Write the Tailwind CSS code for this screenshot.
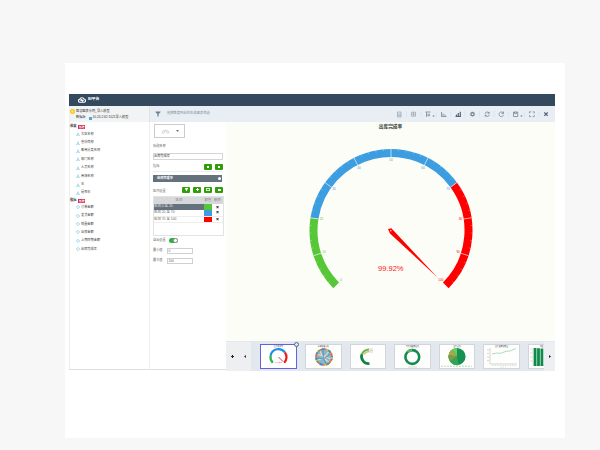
<!DOCTYPE html>
<html lang="zh-CN">
<head>
    <meta charset="UTF-8">
    <meta name="viewport" content="width=device-width, initial-scale=1.0">
    <title>出库完成率</title>
    <script src="https://cdn.jsdelivr.net/npm/@tailwindcss/browser@4"></script>
</head>
<body class="bg-[#f7f7f7] w-[600px] h-[450px] overflow-hidden pl-[65px] pt-[63px] font-['Liberation_Sans','Noto_Sans_CJK_SC',sans-serif] text-[4.4px] leading-none text-[#555]">
    <div class="w-[500px] h-[375px] bg-white pl-1 pt-[31px]">
        <div class="w-[486px] h-[276px] flex flex-col border-b border-[#dcdfe2] whitespace-nowrap">
            <header class="h-3 shrink-0 bg-[#34495e] flex items-center pl-[9px] gap-[2px] text-white font-bold text-[3.8px]">
                <svg class="w-2 h-[6px]" viewBox="0 0 16 12" fill="none" stroke="white" stroke-width="2.4"><path d="M4 10.5a3 3 0 0 1-.3-6A4.5 4.5 0 0 1 12 4a3.3 3.3 0 0 1 .5 6.5z"/><path d="M5 7.5l2-2 2 2.5 2-2"/></svg>
                <span>BI平台</span>
            </header>

            <div class="flex flex-1 min-h-0">
                <!-- Field list -->
                <aside class="w-[80px] shrink-0 border-l border-[#eee]">
                    <div class="h-4 bg-[#f2f3f4] pt-[2px] text-[3.2px] text-[#333]">
                        <div class="flex items-center h-[7px] gap-[1px]"><span class="w-[5px] h-[5px] rounded-full border border-[#f2b90c] bg-[#ffe34d]"></span>智慧图表示例_导入模型</div>
                        <div class="flex items-center h-[6px] pl-[6px]">数据源<span class="ml-[3px] mr-[1px] w-[3px] h-[3px] bg-[#4aa8e0]"></span>10.24.2.62:1521导入模型</div>
                    </div>
                    <div class="flex items-center h-2 pt-[1px] gap-[1px] font-bold text-[3.2px] text-[#333]">维度<span class="w-[7px] h-[4px] ml-[1px] bg-[#d6224c] text-white text-[2.8px] leading-[4px] text-center">新增</span></div>
                    <ul id="dims"></ul>
                    <div class="flex items-center h-[6px] pt-[1px] gap-[1px] font-bold text-[3.2px] text-[#333]">指标<span class="w-[7px] h-[4px] ml-[1px] bg-[#d6224c] text-white text-[2.8px] leading-[4px] text-center">新增</span></div>
                    <ul id="measures"></ul>
                </aside>

                <div class="flex-1 flex flex-col min-w-0">
                    <!-- Toolbar -->
                    <div class="h-4 shrink-0 bg-[#e8eef4] flex items-center border-l border-[#dde3e8] text-[#87929d]">
                        <svg class="w-[6px] h-[6px] ml-[5px]" viewBox="0 0 12 12" fill="#6f8294"><path d="M1 1h10v1.5L7.3 6v5H4.7V6L1 2.500z"/></svg>
                        <span class="ml-[6px] text-[3.3px]">拖拽维度到此处生成图表筛选</span>
                        <svg class="ml-auto mr-1 w-[157px] h-4 shrink-0" viewBox="394 106 157 16" fill="none" stroke="#778693" stroke-width=".8">
                            <g stroke="#d5dce3" stroke-width=".5"><path d="M406.500 111v6M421 111v6M436.500 111v6M450.500 111v6M465 111v6M479.500 111v6M494 111v6M508.500 111v6M524.500 111v6M539 111v6"/></g>
                            <path stroke="#a1abb4" d="M397.500 112h3.500v5h-3.500zM398 114h3M398 115.500h3"/>
                            <path stroke="#a1abb4" d="M411.500 112.200h4v4h-4zM413.500 112v4M411.500 114.200h4"/>
                            <path d="M425.500 112h5M426.500 112v5M429 113.500v3M427 115h3"/><path fill="#778693" stroke="none" d="M432.300 115.500h2.500l-1.200 1.400z"/>
                            <path d="M441.500 112v4.500h5M443 113.500v2.500M445 114.500v1.500"/>
                            <path stroke="#53677a" d="M455.500 116.500h5.500M456.500 116v-1.500M458.300 116v-3M460.300 116v-4.200" stroke-width="1.200"/>
                            <circle cx="472.500" cy="114.200" r="1.600" stroke="#6b7885" stroke-width="1.100"/><circle cx="472.500" cy="114.200" r="2.300" stroke="#6b7885" stroke-width=".5" stroke-dasharray=".7 .9"/>
                            <path d="M485 113.800a2.200 2.200 0 0 1 4-.8M489.400 114.600a2.200 2.200 0 0 1-4 .8M489.200 111.800v1.500h-1.500M485.200 116.700v-1.500h1.500"/>
                            <path d="M503.300 113a2.300 2.300 0 1 0 .3 1.800M503.500 111.500v2h-2"/>
                            <path d="M513.500 112h4.200v4.500h-4.200zM514.500 112v1.500h2v-1.500"/><path fill="#778693" stroke="none" d="M520.200 115.500h2.500l-1.200 1.400z"/>
                            <path d="M529.500 113.300v-1.500h1.500M532.700 111.800h1.500v1.500M529.500 115.200v1.500h1.500M532.700 116.700h1.500v-1.500"/>
                            <path stroke="#566675" stroke-width="1.200" d="M544.300 112.500l3.400 3.400M547.700 112.500l-3.400 3.400"/>
                        </svg>
                    </div>

                    <div class="flex flex-1 min-h-0">
                        <!-- Chart settings -->
                        <section class="w-[77px] shrink-0 border-l border-[#eee] px-[3px] pt-[2px] text-[3.2px] text-[#666]">
                            <div class="ml-[1px] w-[31px] h-[14px] border border-[#ccc] flex items-center justify-center gap-[6px]">
                                <svg class="w-[9px] h-[6px]" viewBox="0 0 18 12" fill="none" stroke="#aaa"><path d="M2 11a7 7 0 1 1 14 0M5 11a4 4 0 1 1 8 0"/></svg>
                                <svg class="w-[3px] h-[2px]" viewBox="0 0 3 2"><path d="M0 0h3L1.500 2z" fill="#777"/></svg>
                            </div>
                            <div class="h-[4px] mt-[7px]">标题名称</div>
                            <div class="mt-[4px] w-[70px] h-[7px] border border-[#d5d5d5] leading-[5px] text-[#333]">出库完成率</div>
                            <div class="flex items-center justify-between w-[70px] h-[7px] mt-[3px]">指标
                                <span class="flex gap-[3px]"><i class="w-2 h-[6px] rounded-[1px] bg-[#2f9e08] flex items-center justify-center"><b class="size-[2px] bg-white"></b></i><i class="w-2 h-[6px] rounded-[1px] bg-[#2f9e08] flex items-center justify-center"><b class="size-[2px] bg-white"></b></i></span>
                            </div>
                            <div class="mt-[1px] mb-[3px] w-[70px] h-0 border-b border-[#eee]"></div>
                            <div class="w-[69px] h-[7px] bg-[#66717e] text-white font-bold flex items-center justify-between pl-1 pr-[1px]">出库完成率<span class="size-[3px] rounded-full bg-white"></span></div>
                            <div class="flex items-center justify-between w-[70px] h-[7px] mt-[4px]"><span class="pt-1">区间设置</span>
                                <span class="flex gap-[3px]">
                                    <i class="w-2 h-[6px] rounded-[1px] bg-[#2f9e08] flex items-center justify-center"><svg class="size-[3px]" viewBox="0 0 3 3" fill="white"><path d="M0 0h3v1L2 2v1H1V2L0 1z"/></svg></i>
                                    <i class="w-2 h-[6px] rounded-[1px] bg-[#2f9e08] flex items-center justify-center"><svg class="size-[3px]" viewBox="0 0 3 3"><path d="M1.500 0v3M0 1.500h3" stroke="white"/></svg></i>
                                    <i class="w-2 h-[6px] rounded-[1px] bg-[#2f9e08] flex items-center justify-center"><b class="w-[4px] h-[3px] border border-white/80"></b></i>
                                    <i class="w-2 h-[6px] rounded-[1px] bg-[#2f9e08] flex items-center justify-center"><b class="w-[3px] h-[2px] bg-white"></b></i>
                                </span>
                            </div>
                            <div class="mt-[3px] w-[71px] h-[40px] border border-[#e3e3e3] text-[3.4px]">
                                <div class="grid grid-cols-[50px_8px_11px] h-[6.5px] bg-[#d7d8da] items-center text-center text-[#888]"><span>区间</span><span>颜色</span><span>删除</span></div>
                                <div class="grid grid-cols-[50px_8px_11px] h-[6.5px] bg-[#66717e] text-[#e8e8e8] items-center"><span>区间 0 至 20</span><span class="h-full bg-[#56c837]"></span><span class="bg-white h-full leading-[6px] text-center text-black text-[5px] font-bold">×</span></div>
                                <div class="grid grid-cols-[50px_8px_11px] h-[6.500px] items-center border-b border-[#eee]"><span>区间 20 至 70</span><span class="h-full bg-[#3c9ee0]"></span><span class="text-center text-black text-[5px] font-bold">×</span></div>
                                <div class="grid grid-cols-[50px_8px_11px] h-[6.500px] items-center border-b border-[#eee]"><span>区间 70 至 100</span><span class="h-full bg-[#ff0000]"></span><span class="text-center text-black text-[5px] font-bold">×</span></div>
                            </div>
                            <div class="flex items-center mt-[1px] h-[7px]">自动设置<span class="ml-[3px] w-[9px] h-[5px] rounded-full bg-[#27b33e] flex justify-end items-center"><b class="size-[5px] rounded-full bg-white border-[.5px] border-[#999]"></b></span></div>
                            <div class="flex items-center mt-[4px] h-[6px]">最小值<span class="ml-[4px] w-[26px] h-[6px] border border-[#d0d0d0] leading-[4px] pl-[1px]">0</span></div>
                            <div class="flex items-center mt-[4px] h-[6px]">最大值<span class="ml-[4px] w-[26px] h-[6px] border border-[#d0d0d0] leading-[4px] pl-[1px]">100</span></div>
                        </section>

                        <div class="flex-1 flex flex-col min-w-0">
                            <main class="h-[219px] shrink-0 bg-[#fcfdf6]">
                                <svg class="w-[329px] h-[219px]" viewBox="226 122 329 219">
                                    <text x="390.500" y="128.200" text-anchor="middle" font-size="4.700" font-weight="bold" fill="#2c3e36">出库完成率</text>
                                    <g id="gauge"></g>
                                    <path d="M388 229l3.300-.8 2.200 2.300L437.500 277.500 390 233.500z" fill="#ff0000"/>
                                    <circle cx="390.800" cy="230.700" r=".7" fill="white"/>
                                    <text x="390.800" y="271.300" text-anchor="middle" font-size="7.500" fill="#ff1020">99.92%</text>
                                </svg>
                            </main>

                            <!-- Chart strip -->
                            <footer class="flex-1 flex items-center bg-[#e3e8ef] pt-[1px]">
                                <div class="w-[25px] h-full shrink-0 bg-[#eeeff1] flex items-center justify-between px-[5px] mr-[9px]">
                                    <svg class="size-[3px]" viewBox="0 0 3 3"><path d="M1.500 0v3M0 1.500h3" stroke="#222"/></svg>
                                    <svg class="w-[2px] h-[3px]" viewBox="0 0 2 3"><path d="M2 0v3L0 1.500z" fill="#333"/></svg>
                                </div>
                                <div class="flex gap-[8px] w-[284px] shrink-0 overflow-hidden py-[2px]">
                                    <div class="relative shrink-0 w-[37px] h-[25px] border border-[#6260e6] bg-white">
                                        <svg class="size-full" viewBox="0 0 35 23" fill="none" stroke-width="2.200">
                                            <text x="17.500" y="2.300" text-anchor="middle" font-size="1.900" fill="#444" stroke="none">出库完成率</text>
                                            <path d="M11.800 17.700a8 8 0 0 1-2.200-7" stroke="#2fb34a"/><path d="M9.600 10.700a8 8 0 0 1 14.300-3.400" stroke="#1f8fe0"/><path d="M23.900 7.300a8 8 0 0 1-.7 10.400" stroke="#f01818"/>
                                            <path d="M17.500 12l4.500 4.500" stroke="#f01818" stroke-width=".9"/><text x="17.500" y="17.700" text-anchor="middle" font-size="2.200" fill="#f01818" stroke="none">99.92%</text>
                                        </svg>
                                        <span class="absolute -right-[3px] -top-[3px] size-[5px] rounded-full border border-[#5b6e80] bg-[#dce8ef]"></span>
                                    </div>
                                    <div class="shrink-0 w-[37px] h-[25px] border border-[#d2d6dc] bg-[#fefefc]">
                                        <svg class="size-full" viewBox="0 0 35 23" fill="none">
                                            <text x="17.500" y="2.300" text-anchor="middle" font-size="1.900" fill="#444">客商销售分析</text>
                                            <circle cx="18" cy="12" r="7.400" fill="#80b9d0"/>
                                            <path d="M11 9q8 3 14 5M14 6q3 8 9 11M23 6q-5 8-11 9" stroke="#efd5bd" stroke-width="1.200"/><path d="M11 13q8 2 13-4M17 5q-1 8 3 14" stroke="#4b91bd" stroke-width=".9"/>
                                            <circle cx="18" cy="12" r="8" stroke="#e36a55" stroke-width="1.700"/><circle cx="18" cy="12" r="8" stroke="#3b8cca" stroke-width="1.700" stroke-dasharray="3 4"/><circle cx="18" cy="12" r="8" stroke="#e8c93d" stroke-width="1.700" stroke-dasharray="2 8"/><circle cx="18" cy="12" r="8" stroke="#56ad67" stroke-width="1.700" stroke-dasharray="2 10" stroke-dashoffset="5"/>
                                        </svg>
                                    </div>
                                    <div class="shrink-0 w-[36px] h-[25px] border border-[#d2d6dc] bg-[#fefefc]">
                                        <svg class="size-full" viewBox="0 0 34 23" fill="none">
                                            <path d="M18.500 18.500A7 7 0 0 1 11 9" stroke="#11844c" stroke-width="2.600"/><path d="M10.800 9.500A8 8 0 0 1 18 4.500" stroke="#6eae56" stroke-width="2"/><path d="M13 9.500A6 6 0 0 1 18.500 6.500" stroke="#c6cf72" stroke-width="1.500"/>
                                            <path d="M18.500 4h3.500M18.500 5.500h3.500M18.500 7h3.500" stroke="#bbb" stroke-width=".6"/>
                                        </svg>
                                    </div>
                                    <div class="shrink-0 w-[37px] h-[25px] border border-[#d2d6dc] bg-[#fefefc]">
                                        <svg class="size-full" viewBox="0 0 35 23" fill="none">
                                            <text x="17.500" y="2.300" text-anchor="middle" font-size="1.900" fill="#444">年度销售额占比</text>
                                            <circle cx="17.300" cy="12" r="6.900" stroke="#168a50" stroke-width="2.600"/><path d="M12.500 7.200A6.900 6.900 0 0 1 17 5.100" stroke="#52b96c" stroke-width="2.600"/><path d="M13 22h9" stroke="#b5d6bf" stroke-width=".7"/>
                                        </svg>
                                    </div>
                                    <div class="shrink-0 w-[36px] h-[25px] border border-[#d2d6dc] bg-[#fefefc]">
                                        <svg class="size-full" viewBox="0 0 34 23">
                                            <text x="17" y="2.300" text-anchor="middle" font-size="1.900" fill="#444">出库占比</text>
                                            <circle cx="17" cy="11.500" r="8.600" fill="#159150"/><path d="M17 11.500L18.500 20A8.600 8.600 0 0 1 10 16.600z" fill="#36a257"/><path d="M17 11.500L10 16.600A8.600 8.600 0 0 1 8.500 10z" fill="#769e42"/><path d="M17 11.500L8.500 10A8.600 8.600 0 0 1 12 4.400z" fill="#b0a54a"/><path d="M17 11.500L12 4.400A8.600 8.600 0 0 1 17 2.900z" fill="#60d060"/>
                                            <path d="M1 21.200h31" stroke="#9ccaa8" stroke-width=".7" stroke-dasharray="2 1"/>
                                        </svg>
                                    </div>
                                    <div class="shrink-0 w-[37px] h-[25px] border border-[#d2d6dc] bg-[#fefefc]">
                                        <svg class="size-full" viewBox="0 0 35 23" fill="none">
                                            <text x="17.500" y="2.300" text-anchor="middle" font-size="1.900" fill="#444">出库金额趋势图</text>
                                            <path d="M6 3v16h27M3 5h2M3 8.500h2M3 12h2M3 15.500h2" stroke="#b7bdba" stroke-width=".6"/><path d="M8 9l5-1 4 .3 5-2 4-.3 6-2.500" stroke="#9ed0ad" stroke-width=".8"/><path d="M8 20.500h24M16 22h6" stroke="#cbd2ce" stroke-width=".6" stroke-dasharray="1.500 1"/>
                                        </svg>
                                    </div>
                                    <div class="shrink-0 w-4 h-[25px] border-y border-l border-[#d2d6dc] bg-[#fefefc]">
                                        <svg class="size-full" viewBox="0 0 15 23">
                                            <text x="11" y="2.300" font-size="1.800" fill="#444">销售</text>
                                            <path d="M4 3v17h11" fill="none" stroke="#bbb" stroke-width=".5"/><path d="M1 4h2M1 8h2M1 12h2M1 16h2" stroke="#bbb" stroke-width=".5"/>
                                            <path d="M4.700 3h2.800v18H4.700zM8.100 3.200h2.800v17.800H8.100zM11.500 3.500h2.800v17.500h-2.800z" fill="#0d8a4c"/>
                                        </svg>
                                    </div>
                                </div>
                                <div class="flex-1 h-full bg-[#eeeff2] flex items-center pl-[5px]">
                                    <svg class="w-[2px] h-[3px]" viewBox="0 0 2 3"><path d="M0 0v3L2 1.500z" fill="#222"/></svg>
                                </div>
                            </footer>
                        </div>
                    </div>
                </div>
            </div>
        </div>
    </div>

    <script>
        const dims = ['大区名称', '省份简称', '客商分类名称', '部门名称', '人员名称', '商场名称', '年', '是否年'];
        const measures = ['订单金额', '发货金额', '销量金额', '出库金额', '上期同期金额', '出库完成率'];

        const row = (icon, label) => `<li class="h-[8.4px] flex items-center pl-[6px] gap-[1px] text-[3.2px] text-[#444]">
            <svg class="size-1 shrink-0" viewBox="0 0 8 8" fill="none" stroke="#6bbde4" stroke-width="1.3">${icon}</svg>${label}</li>`;

        document.getElementById('dims').innerHTML = dims.map(d => row('<path d="M4 1v2L1.500 7M4 3l2.500 4M1 7h2M5 7h2"/>', d)).join('');
        document.getElementById('measures').innerHTML = measures.map(m => row('<path d="M4 .7L7.300 4 4 7.300.7 4z"/>', m)).join('');

        // Gauge runs from 225deg to -45deg
        const cx = 391, cy = 230.5;
        const point = (value, r) => {
            const a = (225 - value * 2.7) * Math.PI / 180;
            return [(cx + r * Math.cos(a)).toFixed(2), (cy - r * Math.sin(a)).toFixed(2)];
        };
        const bands = [[0, 20, '#56c837'], [20, 70, '#3c9ee0'], [70, 100, '#ff0000']];
        let out = '';
        for (const [from, to, color] of bands) {
            out += `<path d="M${point(from, 77.5)}A77.5 77.5 0 0 1 ${point(to, 77.5)}" fill="none" stroke="${color}" stroke-width="8"/>`;
        }
        for (let v = 2; v < 100; v += 2) {
            const major = v % 10 === 0;
            out += `<path d="M${point(v, major ? 73.5 : 79.5)}L${point(v, 81.5)}" stroke="white" stroke-width="${major ? .7 : .4}" opacity="${major ? .9 : .6}"/>`;
        }
        for (let v = 0; v <= 100; v += 10) {
            const [x, y] = point(v, 70.5);
            const color = v <= 20 ? '#56c837' : v <= 70 ? '#3c9ee0' : '#ff0000';
            out += `<text x="${x}" y="${+y + 1}" text-anchor="middle" font-size="3" fill="${color}">${v}</text>`;
        }
        document.getElementById('gauge').innerHTML = out;
    </script>
</body>
</html>
